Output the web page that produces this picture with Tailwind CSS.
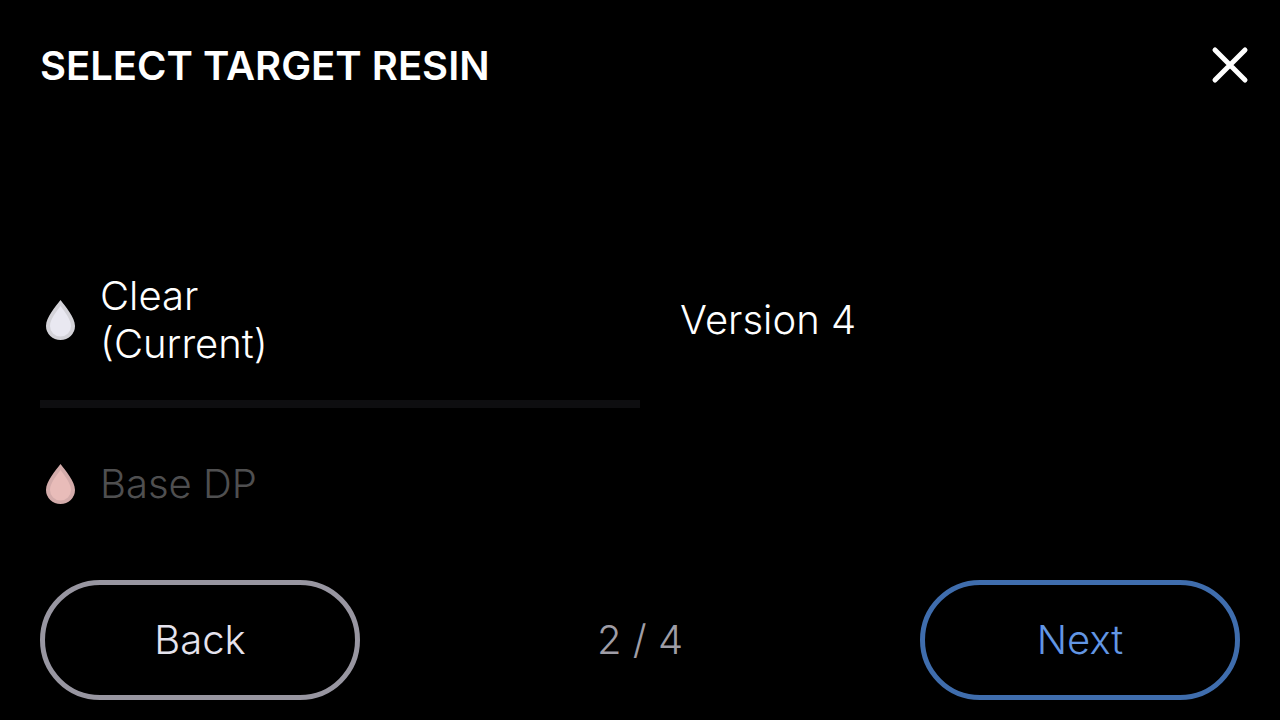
<!DOCTYPE html>
<html lang="en">
<head>
<meta charset="utf-8">
<meta name="viewport" content="width=device-width, initial-scale=1">
<title>Select target resin</title>
<script src="https://cdn.jsdelivr.net/npm/@tailwindcss/browser@4"></script>
</head>
<body class="bg-black text-white font-['Inter',sans-serif]">
<div class="flex min-h-screen flex-col px-10 pb-5 text-[40px] leading-12 font-light">
  <header class="-mr-5 flex h-33 items-center justify-between">
    <h1 class="font-semibold">SELECT TARGET RESIN</h1>
    <button type="button" aria-label="Close" class="p-2">
      <svg class="size-11" viewBox="0 0 44 44" fill="none" stroke="#fff" stroke-width="5" stroke-linecap="round" aria-hidden="true"><path d="M7 6 37 36M37 6 7 36"/></svg>
    </button>
  </header>

  <main class="grid flex-1 grid-cols-2 pt-27">
    <ul>
      <li class="border-b-8 border-[#0e0e10]">
        <button type="button" class="flex h-40 w-full items-center gap-5 text-left">
          <svg class="size-10" viewBox="0 0 40 40" aria-hidden="true"><path fill="#d3d2d8" d="M20.500 0C16 6 6 17 6 26a14.500 14 0 0 0 29 0C35 17 25 6 20.500 0Z"/><path fill="#e9e8f1" d="M20.500 6C17 11 10 19 10 26a10.500 10.500 0 0 0 21 0C31 19 24 11 20.500 6Z"/></svg>
          <span>Clear<br>(Current)</span>
        </button>
      </li>
      <li>
        <button type="button" class="flex h-38 w-full items-center gap-5 text-left text-[#4f4f50]">
          <svg class="size-10" viewBox="0 0 40 40" aria-hidden="true"><path fill="#d3abaa" d="M20.500 0C16 6 6 17 6 26a14.500 14 0 0 0 29 0C35 17 25 6 20.500 0Z"/><path fill="#e8bcb9" d="M20.500 6C17 11 10 19 10 26a10.500 10.500 0 0 0 21 0C31 19 24 11 20.500 6Z"/></svg>
          <span>Base DP</span>
        </button>
      </li>
    </ul>
    <ul>
      <li><button type="button" class="flex h-40 w-full items-center px-10 text-left">Version 4</button></li>
    </ul>
  </main>

  <footer class="mt-5 flex items-center justify-between">
    <button type="button" class="h-30 w-80 rounded-full border-5 border-[#9896a1] text-[#e5e3ee]">Back</button>
    <p class="text-[#9f9da6]">2 / 4</p>
    <button type="button" class="h-30 w-80 rounded-full border-5 border-[#3f6dad] text-[#6296e4]">Next</button>
  </footer>
</div>
</body>
</html>
